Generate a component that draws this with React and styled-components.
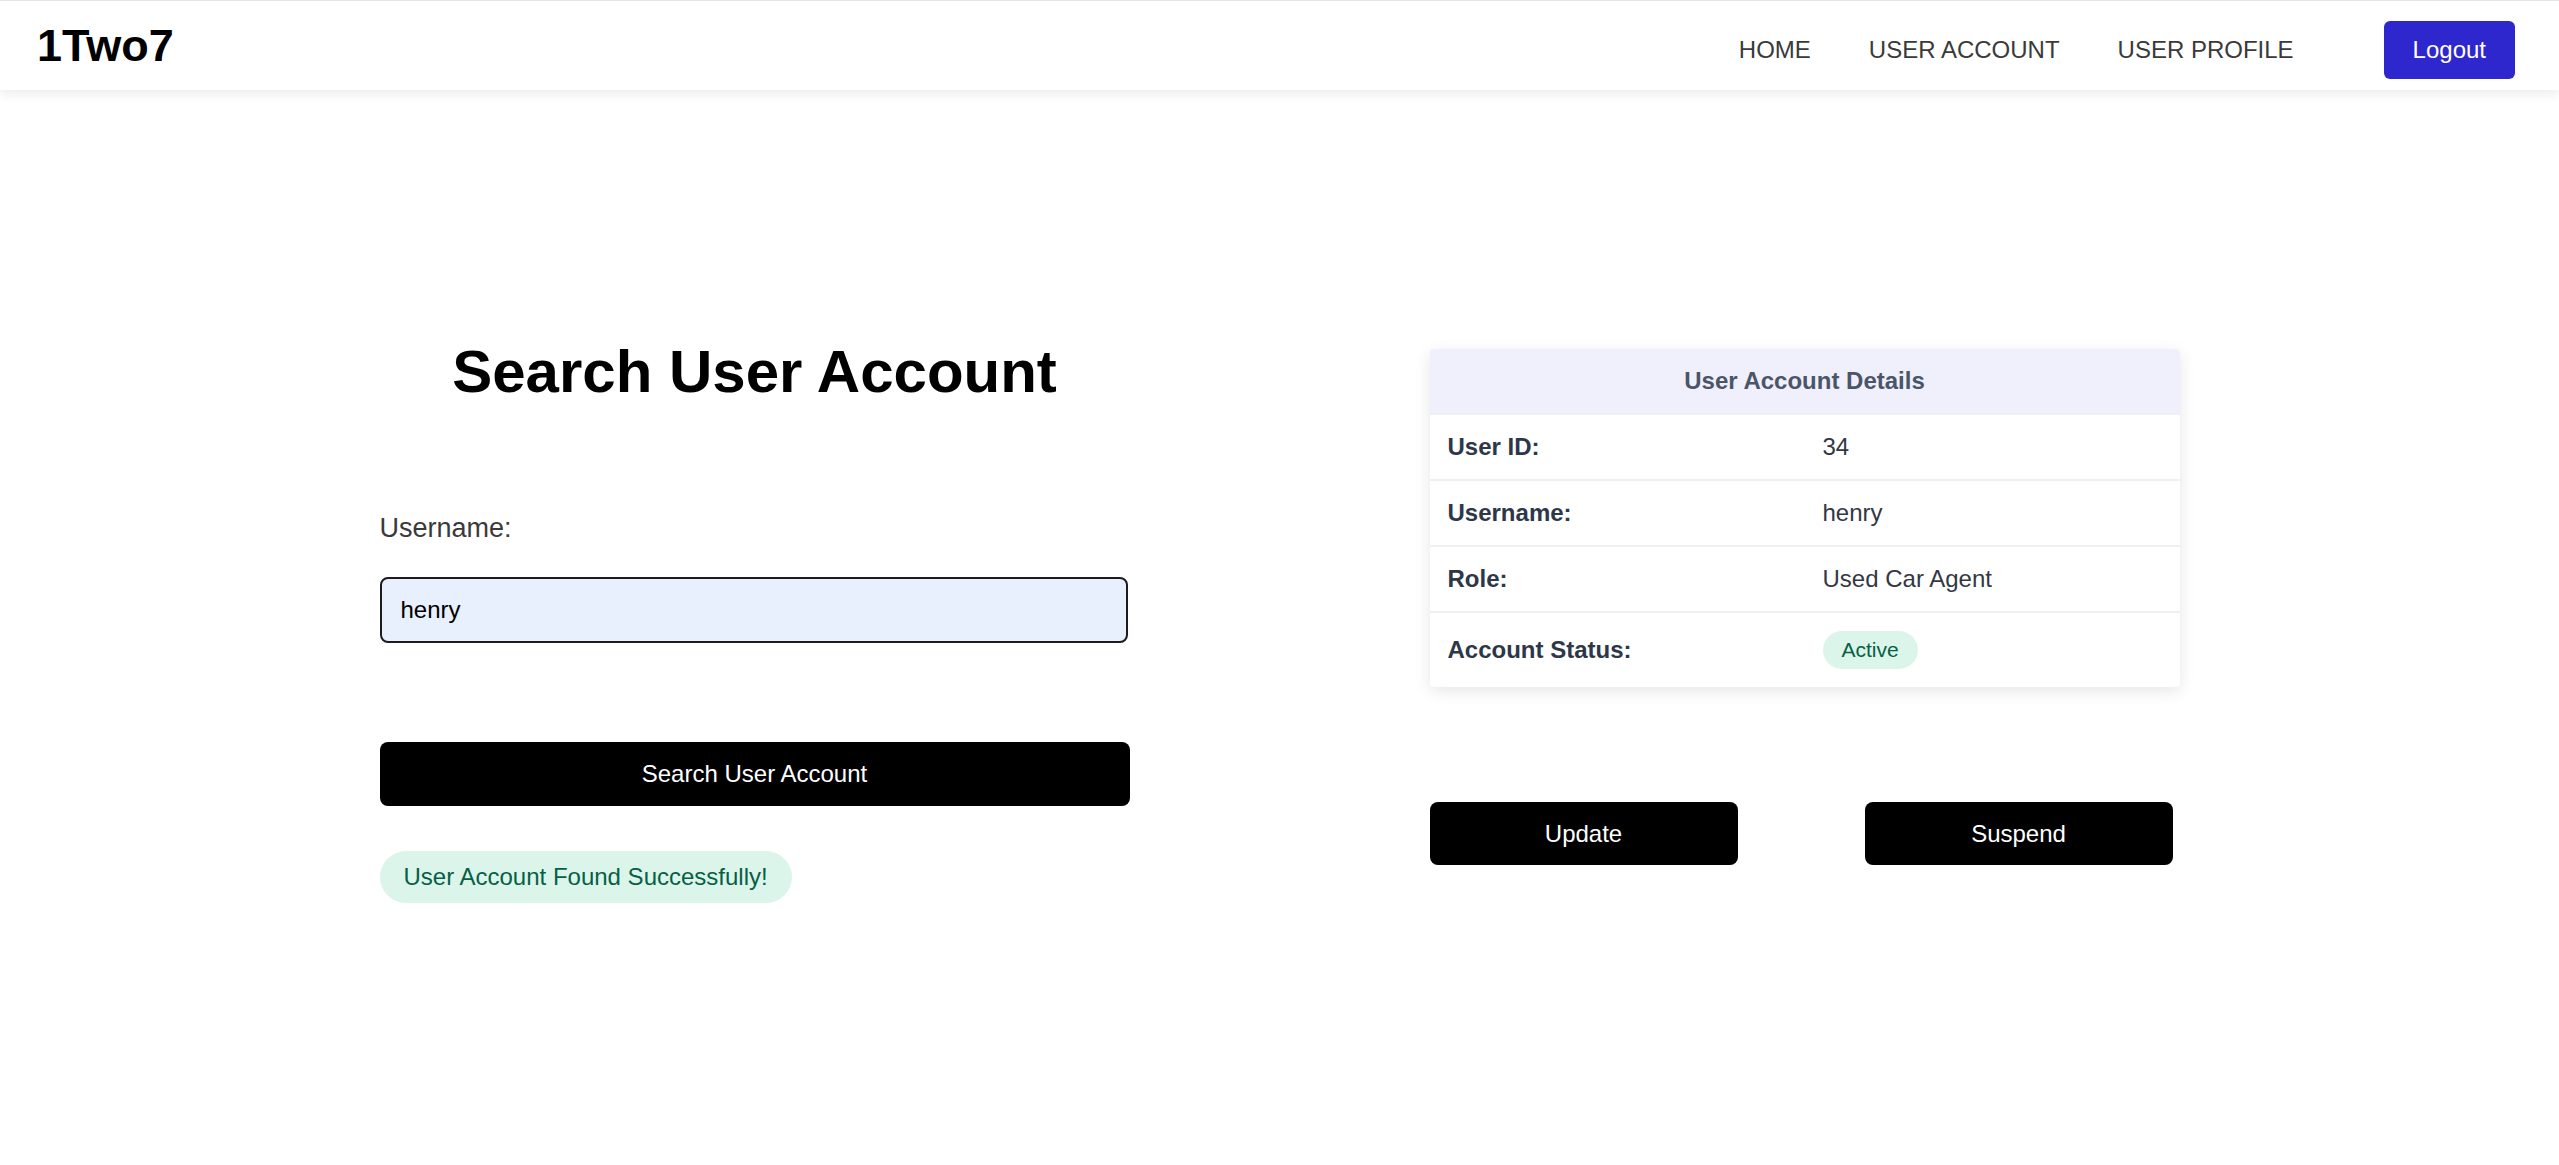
import React from "react";
import styled, { createGlobalStyle } from "styled-components";

const GlobalStyle = createGlobalStyle`
  * {
    box-sizing: border-box;
  }
  body {
    margin: 0;
    background: #ffffff;
    font-family: "Liberation Sans", Arial, Helvetica, sans-serif;
  }
`;

const Navbar = styled.nav`
  height: 90px;
  display: flex;
  align-items: center;
  justify-content: space-between;
  padding: 0 44px 0 37px;
  background: #ffffff;
  border-top: 1px solid #e4e4e4;
  box-shadow: 0 4px 10px rgba(0, 0, 0, 0.08);
  position: relative;
  z-index: 2;
`;

const Logo = styled.div`
  font-size: 45px;
  font-weight: 700;
  color: #000000;
`;

const NavRight = styled.div`
  display: flex;
  align-items: center;
  padding-top: 9px;
`;

const NavLinks = styled.div`
  display: flex;
  align-items: center;
  gap: 58px;
`;

const NavLink = styled.a`
  font-size: 24px;
  color: #3a3a3a;
  text-decoration: none;
  cursor: pointer;
`;

const LogoutButton = styled.button`
  margin-left: 90px;
  height: 58px;
  padding: 0 29px;
  border: none;
  border-radius: 6px;
  background: #2f27ce;
  color: #ffffff;
  font-family: inherit;
  font-size: 24px;
  cursor: pointer;
`;

const Main = styled.main`
  display: flex;
  justify-content: center;
  align-items: flex-start;
  gap: 300px;
  padding-top: 247px;
`;

const Column = styled.section`
  width: 750px;
  display: flex;
  flex-direction: column;
  align-items: flex-start;
  margin-top: ${(p) => p.$offset || 0}px;
`;

const Title = styled.h1`
  align-self: stretch;
  margin: 0;
  font-size: 60px;
  font-weight: 700;
  text-align: center;
  color: #000000;
`;

const Label = styled.label`
  margin-top: 107px;
  font-size: 27px;
  color: #3a3a3a;
`;

const TextInput = styled.input`
  margin-top: 33px;
  width: 748px;
  height: 66px;
  padding: 0 19px;
  border: 2px solid #1c1c1c;
  border-radius: 8px;
  background: #e8f0fe;
  font-family: inherit;
  font-size: 24px;
  color: #000000;
  outline: none;
`;

const BlackButton = styled.button`
  width: ${(p) => p.$width}px;
  height: ${(p) => p.$height}px;
  margin-top: ${(p) => p.$top || 0}px;
  border: none;
  border-radius: 8px;
  background: #000000;
  color: #ffffff;
  font-family: inherit;
  font-size: 24px;
  cursor: pointer;
`;

const SuccessPill = styled.div`
  margin-top: 45px;
  height: 52px;
  line-height: 52px;
  padding: 0 24px;
  border-radius: 26px;
  background: #dcf5ea;
  color: #065f46;
  font-size: 24px;
`;

const Card = styled.div`
  width: 750px;
  background: #ffffff;
  border-radius: 4px;
  overflow: hidden;
  box-shadow: 0 4px 16px rgba(0, 0, 0, 0.1);
`;

const Table = styled.table`
  width: 100%;
  border-collapse: collapse;
  font-size: 24px;
  color: #2d3748;
`;

const HeadCell = styled.th`
  padding: 18px;
  background: #f0f0fd;
  color: #4a5568;
  font-weight: 700;
  text-align: center;
`;

const Row = styled.tr`
  border-top: 2px solid #f0f0f0;
`;

const Cell = styled.td`
  width: 50%;
  padding: 18px;
  text-align: left;
  font-weight: ${(p) => (p.$bold ? 700 : 400)};
  color: ${(p) => (p.$bold ? "#2d3748" : "#333844")};
`;

const StatusBadge = styled.span`
  display: inline-block;
  vertical-align: middle;
  padding: 7px 19px;
  line-height: 24px;
  border-radius: 19px;
  background: #dcf5ea;
  color: #065f46;
  font-size: 21px;
`;

const ActionRow = styled.div`
  margin-top: 115px;
  display: flex;
  gap: 127px;
`;

const details = [
  { label: "User ID:", value: "34" },
  { label: "Username:", value: "henry" },
  { label: "Role:", value: "Used Car Agent" },
];

export default function App() {
  return (
    <>
      <GlobalStyle />
      <Navbar>
        <Logo>1Two7</Logo>
        <NavRight>
          <NavLinks>
            <NavLink>HOME</NavLink>
            <NavLink>USER ACCOUNT</NavLink>
            <NavLink>USER PROFILE</NavLink>
          </NavLinks>
          <LogoutButton>Logout</LogoutButton>
        </NavRight>
      </Navbar>

      <Main>
        <Column>
          <Title>Search User Account</Title>
          <Label htmlFor="username">Username:</Label>
          <TextInput id="username" defaultValue="henry" />
          <BlackButton $width={750} $height={64} $top={99}>
            Search User Account
          </BlackButton>
          <SuccessPill>User Account Found Successfully!</SuccessPill>
        </Column>

        <Column $offset={12}>
          <Card>
            <Table>
              <thead>
                <tr>
                  <HeadCell colSpan={2}>User Account Details</HeadCell>
                </tr>
              </thead>
              <tbody>
                {details.map((d) => (
                  <Row key={d.label}>
                    <Cell $bold>{d.label}</Cell>
                    <Cell>{d.value}</Cell>
                  </Row>
                ))}
                <Row>
                  <Cell $bold>Account Status:</Cell>
                  <Cell>
                    <StatusBadge>Active</StatusBadge>
                  </Cell>
                </Row>
              </tbody>
            </Table>
          </Card>
          <ActionRow>
            <BlackButton $width={308} $height={63}>Update</BlackButton>
            <BlackButton $width={308} $height={63}>Suspend</BlackButton>
          </ActionRow>
        </Column>
      </Main>
    </>
  );
}
